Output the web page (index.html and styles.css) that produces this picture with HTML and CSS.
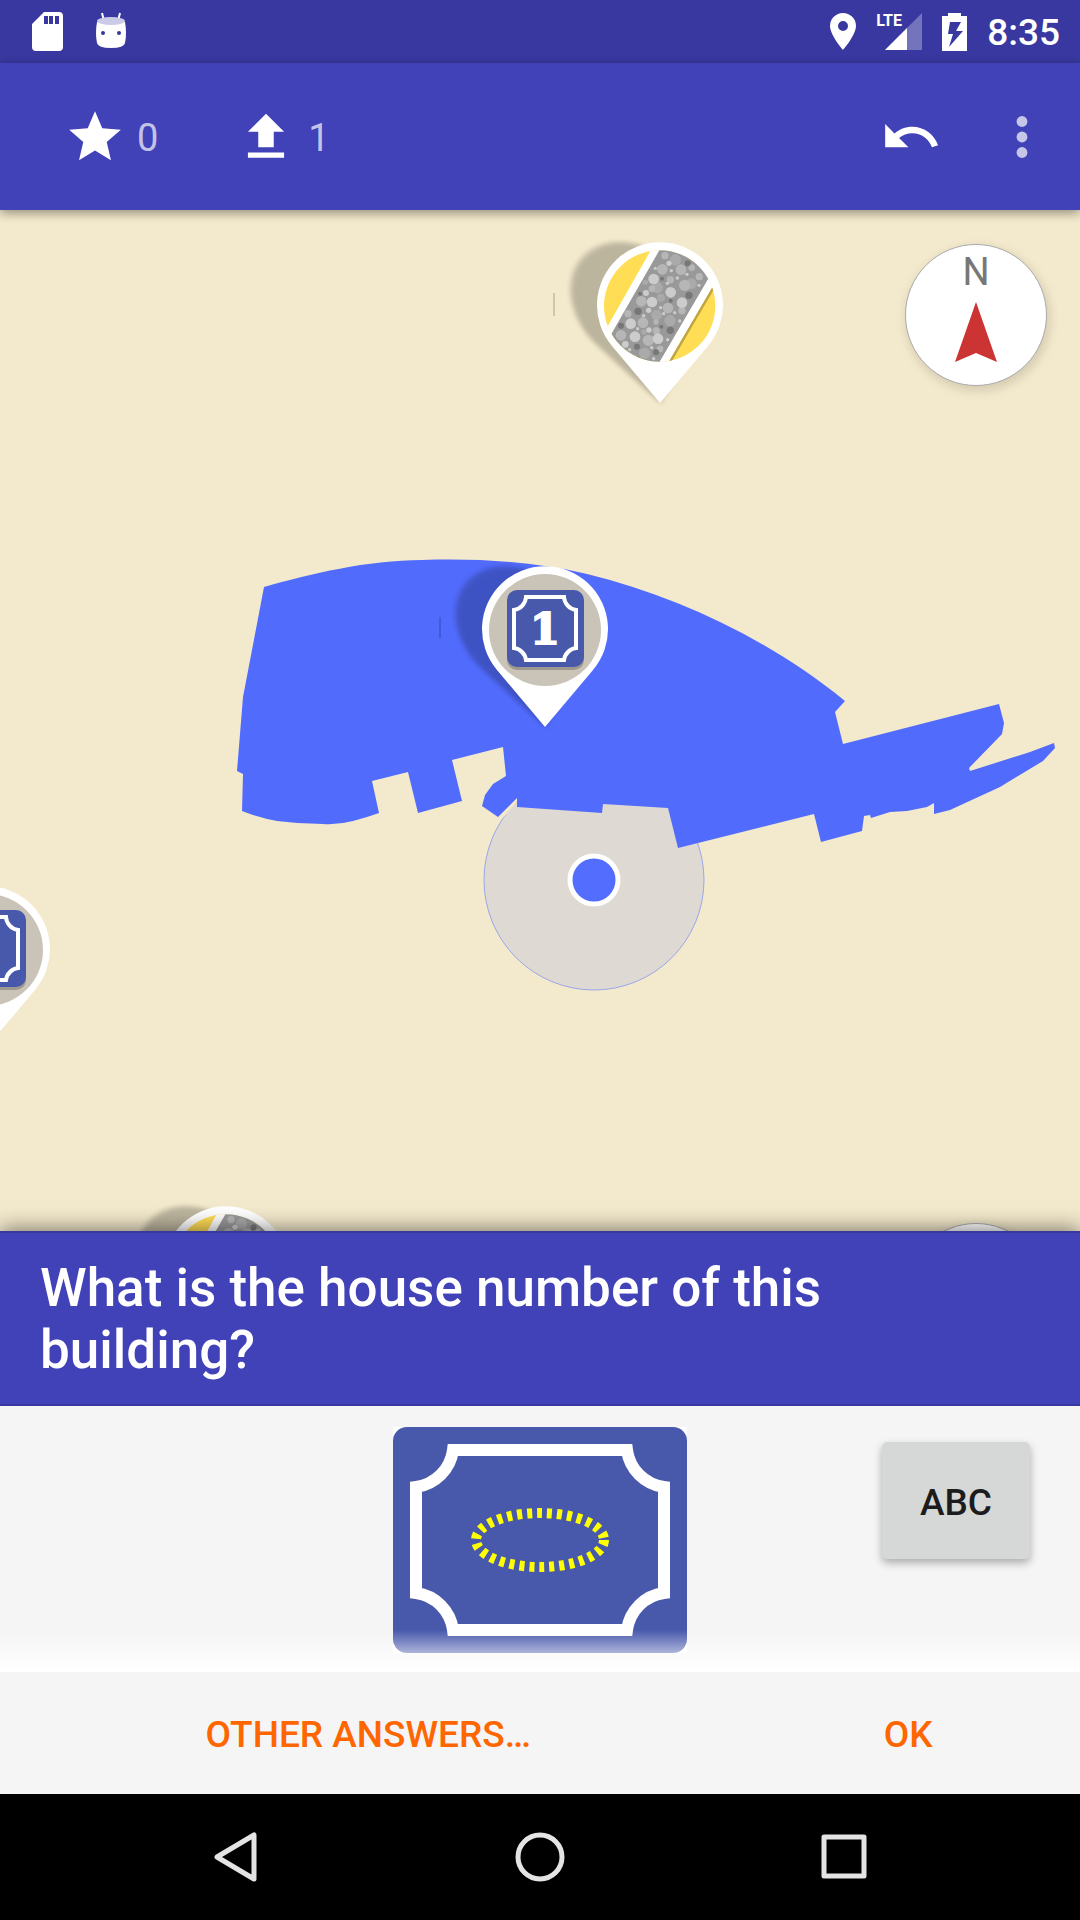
FILE: index.html
```html
<!DOCTYPE html>
<html lang="en">
<head>
<meta charset="utf-8">
<meta name="viewport" content="width=device-width, initial-scale=1">
<title>House number quest</title>
<link rel="stylesheet" href="styles.css">
</head>
<body>
<div class="status">
  <div class="status-left">
    <svg width="32" height="40" viewBox="0 0 32 40"><path fill="#fff" fill-rule="evenodd" d="M12 0H27Q31 0 31 4V35Q31 39 27 39H4Q0 39 0 35V12ZM12 4V12H16V4ZM17 4V12H21V4ZM23 4V12H27V4Z"/></svg>
    <svg width="32" height="40" viewBox="0 0 32 40"><path d="M7 1L9 9M25 1L23 9" stroke="#fff" stroke-width="2"/><path fill="#fff" d="M2 10Q0 21 2 31Q3 36 16 36Q29 36 30 31Q32 21 30 10Z"/><ellipse cx="16" cy="9" rx="14" ry="4" fill="#cbcbe8"/><circle cx="8" cy="21" r="2" fill="#3838a0"/><circle cx="24" cy="21" r="2" fill="#3838a0"/></svg>
  </div>
  <div class="status-right">
    <svg width="26" height="38" viewBox="0 0 26 38"><path fill="#fff" fill-rule="evenodd" d="M13 0A13 13 0 0 0 0 13C0 22 13 37 13 37S26 22 26 13A13 13 0 0 0 13 0ZM13 8A5 5 0 1 1 13 18A5 5 0 1 1 13 8Z"/></svg>
    <div class="signal">
      <span class="lte">LTE</span>
      <svg width="46" height="38" viewBox="0 0 46 38"><path fill="#fff" opacity=".3" d="M46 0V37H9Z"/><path fill="#fff" d="M31 15V37H9Z"/></svg>
    </div>
    <svg width="25" height="38" viewBox="0 0 25 38"><path fill="#fff" fill-rule="evenodd" d="M6 0H19V3H25V38H0V3H6ZM8 9L6 21H11L7 34L21 18H14L19 9Z"/></svg>
    <time class="clock">8:35</time>
  </div>
</div>

<header class="toolbar">
  <button class="tool" type="button" aria-label="Solved quests">
    <svg class="icon" viewBox="0 0 24 24"><path d="M12 17.27L18.18 21l-1.64-7.03L22 9.24l-7.19-.61L12 2 9.19 8.63 2 9.24l5.46 4.73L5.82 21z"/></svg>
    <span class="count">0</span>
  </button>
  <button class="tool" type="button" aria-label="Upload answers">
    <svg class="icon" viewBox="0 0 24 24"><path d="M9 16h6v-6h4l-7-7-7 7h4zm-4 2h14v2H5z"/></svg>
    <span class="count">1</span>
  </button>
  <div class="tool-end">
    <button class="tool" type="button" aria-label="Undo">
      <svg class="icon" viewBox="0 0 24 24"><path d="M12.500 8c-2.650 0-5.050.99-6.900 2.600L2 7v9h9l-3.620-3.620c1.390-1.160 3.160-1.880 5.120-1.880 3.540 0 6.550 2.310 7.600 5.500l2.370-.78C21.080 11.030 17.150 8 12.500 8z"/></svg>
    </button>
    <button class="tool" type="button" aria-label="More options">
      <svg class="icon dim" viewBox="0 0 24 24"><circle cx="12" cy="6" r="2.100"/><circle cx="12" cy="12" r="2.100"/><circle cx="12" cy="18" r="2.100"/></svg>
    </button>
  </div>
</header>

<main class="map">
  <svg class="map-canvas" viewBox="0 210 1080 1021" preserveAspectRatio="xMidYMid slice" role="img" aria-label="Map with quest pins">
    <defs>
      <filter id="soft" x="-30%" y="-30%" width="160%" height="160%"><feGaussianBlur stdDeviation="2.500"/></filter>
      <clipPath id="face"><circle cx="358" cy="258" r="167"/></clipPath>
      <g id="pin">
        <path d="M0 0L-48 -57A63 63 0 1 1 48 -57Z" transform="skewX(14)" opacity=".22" filter="url(#soft)"/>
        <path fill="#fff" d="M0 0L-48 -57A63 63 0 1 1 48 -57Z"/>
      </g>
      <g id="house-pin">
        <use href="#pin"/>
        <circle cy="-97" r="56" fill="#c9c4b7"/>
        <rect x="-38" y="-134" width="77" height="77" rx="10" fill="#000" opacity=".22"/>
        <rect x="-38" y="-137" width="77" height="77" rx="10" fill="#4859ac"/>
        <path fill="none" stroke="#fff" stroke-width="4" d="M-19 -130H19A14 14 0 0 0 31 -117V-79A14 14 0 0 0 19 -67H-19A14 14 0 0 0 -31 -79V-117A14 14 0 0 0 -19 -130Z"/>
        <text class="pin-number" y="-83">1</text>
      </g>
      <g id="road-pin">
        <use href="#pin"/>
        <g transform="scale(.3333) translate(-359 -549)">
          <g clip-path="url(#face)">
            <rect x="190" y="90" width="340" height="336" fill="#ffdd55"/>
            <path fill="#c0a640" d="M521 208L391 430H375L505 190Z"/>
            <path fill="#fff" d="M343 70L190 340L220 350L350 440H376L530 176L500 150L368 70Z"/>
            <path fill="#999" d="M369 70L204 358L330 474L540 115L480 70Z"/>
            <path fill="#fff" d="M540 115L330 474H356L530 176Z"/>
            <g fill="#aaa"><circle cx="405" cy="120" r="17"/><circle cx="453" cy="191" r="16"/><circle cx="351" cy="203" r="17"/><circle cx="362" cy="233" r="12"/><circle cx="349" cy="285" r="16"/><circle cx="389" cy="302" r="17"/><circle cx="313" cy="400" r="17"/><circle cx="315" cy="187" r="8"/><circle cx="311" cy="336" r="8"/></g>
            <g fill="#b6b6b6"><circle cx="374" cy="107" r="11"/><circle cx="366" cy="148" r="16"/><circle cx="422" cy="149" r="16"/><circle cx="454" cy="143" r="10"/><circle cx="477" cy="170" r="11"/><circle cx="390" cy="179" r="11"/><circle cx="433" cy="196" r="17"/><circle cx="335" cy="206" r="10"/><circle cx="303" cy="244" r="16"/><circle cx="383" cy="264" r="16"/><circle cx="425" cy="272" r="11"/><circle cx="263" cy="281" r="11"/><circle cx="308" cy="308" r="16"/><circle cx="348" cy="332" r="11"/><circle cx="242" cy="346" r="16"/><circle cx="324" cy="361" r="17"/><circle cx="359" cy="387" r="10"/><circle cx="347" cy="306" r="8"/></g>
            <g fill="#ccc"><circle cx="340" cy="177" r="16"/><circle cx="391" cy="217" r="16"/><circle cx="335" cy="246" r="16"/><circle cx="425" cy="248" r="16"/><circle cx="271" cy="311" r="16"/><circle cx="284" cy="350" r="16"/><circle cx="353" cy="356" r="16"/><circle cx="386" cy="130" r="8"/><circle cx="317" cy="219" r="9"/><circle cx="325" cy="271" r="8"/><circle cx="326" cy="330" r="8"/><circle cx="255" cy="373" r="10"/><circle cx="393" cy="152" r="5"/><circle cx="440" cy="163" r="5"/><circle cx="411" cy="174" r="5"/><circle cx="381" cy="190" r="5"/><circle cx="476" cy="196" r="5"/><circle cx="345" cy="145" r="5"/><circle cx="361" cy="263" r="5"/><circle cx="403" cy="278" r="5"/><circle cx="370" cy="281" r="5"/><circle cx="310" cy="287" r="5"/><circle cx="418" cy="303" r="5"/><circle cx="292" cy="326" r="5"/><circle cx="382" cy="359" r="5"/><circle cx="334" cy="383" r="5"/><circle cx="268" cy="389" r="5"/><circle cx="340" cy="416" r="5"/></g>
            <g fill="#777"><circle cx="442" cy="130" r="9"/><circle cx="365" cy="176" r="6"/><circle cx="446" cy="226" r="11"/><circle cx="391" cy="242" r="6"/><circle cx="299" cy="221" r="6"/><circle cx="293" cy="274" r="11"/><circle cx="242" cy="317" r="9"/><circle cx="390" cy="331" r="11"/><circle cx="363" cy="320" r="6"/><circle cx="290" cy="380" r="9"/><circle cx="347" cy="397" r="9"/></g>
          </g>
        </g>
      </g>
    </defs>
    <circle cx="594" cy="880" r="110" fill="#ded9d3" stroke="#9ba6ea"/>
    <path fill="#f3e9cc" d="M498 817L517 798L518 801L500 821Z"/>
    <path fill="#516bfc" d="M264 587C310 574 368 560 422 560C480 558 535 562 587 574C680 597 770 640 845 701L835 712L843 744L999 704L1004 723L1002 734L969 768L970 771L1030 752L1054 743L1055 748L1043 761L1000 787L950 810L934 814V803L927 807L907 811L890 812L871 818L870 815L864 816L862 831L821 842L814 814L678 848L668 808L603 804L602 813L517 807V798L498 817L482 806L485 795L493 784L506 776L503 747L452 760L462 801L418 813L408 772L372 781L379 813L367 817L353 821Q338 825 323 824Q300 824 277 821Q260 818 242 811L243 774L237 771L243 697Z"/>
    <path d="M554 293V316M440 617V638" stroke="#000" opacity=".3"/>
    <circle cx="594" cy="880" r="24" fill="#536dfe" stroke="#fff" stroke-width="5"/>
    <use href="#road-pin" x="660" y="403"/>
    <use href="#house-pin" x="545" y="727"/>
    <use href="#house-pin" x="-13" y="1047"/>
    <use href="#road-pin" x="226" y="1367"/>
  </svg>
  <button class="round compass" type="button" aria-label="Compass, north up">
    <span>N</span>
    <svg width="42" height="60" viewBox="0 0 42 60"><path fill="#cc3333" d="M21 0L42 60L21 51L0 60Z"/></svg>
  </button>
  <button class="round locate" type="button" aria-label="My location"></button>
</main>

<section class="sheet">
  <h1 class="question">What is the house number of this building?</h1>
  <div class="answer">
    <div class="sign">
      <svg class="sign-art" viewBox="0 0 294 226">
        <rect width="294" height="226" fill="#fff"/>
        <rect width="294" height="226" rx="14" fill="#4859ac"/>
        <path fill="none" stroke="#fff" stroke-width="12" d="M60 23H234A43 43 0 0 0 271 60V166A43 43 0 0 0 234 203H60A43 43 0 0 0 23 166V60A43 43 0 0 0 60 23Z"/>
        <ellipse cx="147" cy="113" rx="64" ry="27" fill="none" stroke="#ff0" stroke-width="10" stroke-dasharray="5 5"/>
      </svg>
      <input class="sign-input" type="text" aria-label="House number">
    </div>
    <button class="keyboard" type="button">ABC</button>
  </div>
  <div class="actions">
    <button type="button">OTHER ANSWERS…</button>
    <button type="button">OK</button>
  </div>
</section>

<nav class="navbar" aria-label="System">
  <button type="button" aria-label="Back"><svg width="60" height="60" viewBox="0 0 60 60"><path d="M11 30L48 8V52Z"/></svg></button>
  <button type="button" aria-label="Home"><svg width="60" height="60" viewBox="0 0 60 60"><circle cx="30" cy="30" r="22"/></svg></button>
  <button type="button" aria-label="Recent apps"><svg width="60" height="60" viewBox="0 0 60 60"><rect x="10" y="10" width="40" height="39"/></svg></button>
</nav>
</body>
</html>
```

FILE: styles.css
```css
* { box-sizing: border-box; }

body {
  margin: 0;
  min-height: 100vh;
  display: flex;
  flex-direction: column;
  font-family: Roboto, "Liberation Sans", sans-serif;
  background: #f3e9cc;
}

button {
  margin: 0;
  padding: 0;
  border: 0;
  background: none;
  font: inherit;
  color: inherit;
  cursor: pointer;
}

svg { display: block; }

.status {
  display: flex;
  justify-content: space-between;
  height: 63px;
  padding: 0 20px 0 32px;
  background: #3838a0;
  color: #fff;
}

.status-left,
.status-right {
  display: flex;
  align-items: center;
}

.status-left { gap: 31px; }
.status-right { gap: 20px; }

.signal {
  position: relative;
}

.lte {
  position: absolute;
  left: 0;
  top: 0;
  font-size: 16px;
  line-height: 16px;
  font-weight: 700;
}

.clock {
  padding-top: 3px;
  font-size: 37px;
  line-height: 44px;
  font-weight: 500;
}

.toolbar {
  position: relative;
  z-index: 1;
  display: flex;
  align-items: center;
  gap: 77px;
  height: 147px;
  padding: 0 27px 0 64px;
  background: #4141b8;
  box-shadow: 0 3px 10px rgba(0, 0, 0, .4);
}

.tool {
  display: flex;
  align-items: center;
  gap: 11px;
  font-size: 38px;
  line-height: 44px;
  color: rgba(255, 255, 255, .7);
}

.count { padding-top: 3px; }

.tool-end {
  display: flex;
  gap: 49px;
  margin-left: auto;
}

.icon {
  width: 62px;
  height: 62px;
  fill: #fff;
}

.dim { opacity: .7; }

.map {
  position: relative;
  flex: 1;
  min-height: 400px;
  overflow: hidden;
}

.map-canvas {
  position: absolute;
  inset: 0;
  width: 100%;
  height: 100%;
}

.pin-number {
  font: 700 43px "DejaVu Serif", serif;
  fill: #fff;
  stroke: #fff;
  stroke-width: 2px;
  text-anchor: middle;
}

.round {
  position: absolute;
  right: 33px;
  width: 142px;
  height: 142px;
  border: 1px solid #aaa;
  border-radius: 50%;
  background: #fff;
  box-shadow: 2px 4px 12px rgba(0, 0, 0, .15);
}

.compass {
  top: 34px;
  display: flex;
  flex-direction: column;
  align-items: center;
  gap: 8px;
  padding-top: 5px;
  font-size: 38px;
  line-height: 44px;
  color: #777;
}

.locate { bottom: -134px; }

.sheet {
  position: relative;
  background: #f5f5f5;
  box-shadow: 0 -2px 20px rgba(0, 0, 0, .5);
}

.question {
  margin: 0;
  padding: 24px 96px 23px 40px;
  border-top: 2px solid #3838a0;
  border-bottom: 2px solid #3838a0;
  background: #4141b8;
  color: #fff;
  font-size: 53px;
  line-height: 62px;
  font-weight: 500;
}

.answer {
  position: relative;
  display: grid;
  grid-template-columns: 1fr auto 1fr;
  align-items: start;
  padding: 21px 0 19px;
}

.answer::after {
  content: "";
  position: absolute;
  inset: auto 0 0;
  height: 42px;
  background: linear-gradient(rgba(255, 255, 255, 0), #fff);
  pointer-events: none;
}

.sign {
  grid-column: 2;
  display: grid;
  width: 294px;
}

.sign-art,
.sign-input {
  grid-area: 1 / 1;
}

.sign-input {
  place-self: center;
  width: 160px;
  height: 80px;
  border: 0;
  outline: 0;
  background: none;
  color: #fff;
  font: 500 64px Roboto, sans-serif;
  text-align: center;
}

.keyboard {
  justify-self: end;
  width: 148px;
  height: 117px;
  margin: 15px 50px 0 0;
  padding-top: 3px;
  border-radius: 5px;
  background: #d6d8d7;
  color: #1c1c1c;
  font-size: 37px;
  font-weight: 500;
  box-shadow: 0 4px 8px rgba(0, 0, 0, .3);
}

.actions {
  display: grid;
  grid-template-columns: 15fr 7fr;
  height: 122px;
  padding-top: 2px;
  color: #ff6600;
  font-size: 37px;
  font-weight: 500;
}

.navbar {
  position: relative;
  display: flex;
  justify-content: center;
  align-items: center;
  gap: 244px;
  height: 126px;
  background: #000;
}

.navbar svg {
  fill: none;
  stroke: #e4e4e4;
  stroke-width: 5;
  stroke-linejoin: round;
}
```
